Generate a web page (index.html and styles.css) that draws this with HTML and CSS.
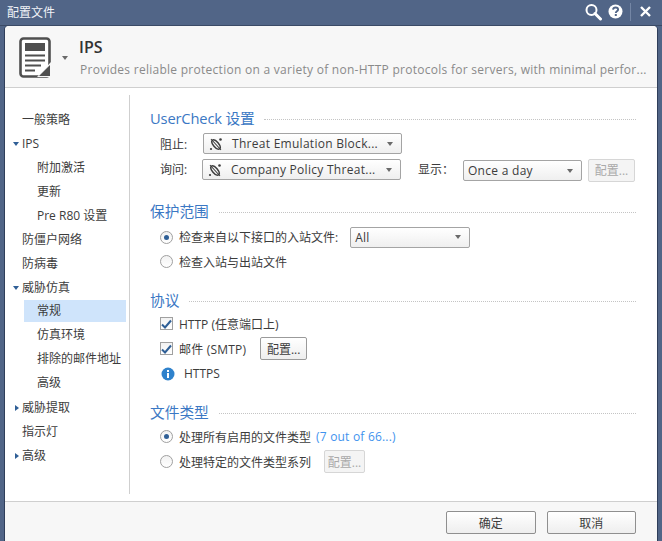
FILE: index.html
```html
<!DOCTYPE html>
<html lang="zh-CN">
<head>
<meta charset="utf-8">
<title>配置文件</title>
<link rel="stylesheet" href="styles.css">
</head>
<body>
<div class="window">
  <div class="titlebar">
    <span class="title">配置文件</span>
    <div class="title-tools">
      <svg class="tool" width="20" height="18" viewBox="0 0 20 18"><circle cx="7.5" cy="7" r="5" fill="none" stroke="#fff" stroke-width="2"/><path d="M11 10.5l5.5 5.5" stroke="#fff" stroke-width="3" stroke-linecap="round"/></svg>
      <svg class="tool help" width="15" height="15" viewBox="0 0 15 15"><circle cx="7.5" cy="7.5" r="7" fill="#fff"/><path d="M5 5.6c.2-1.5 1.3-2.1 2.6-2.1 1.5 0 2.5.8 2.5 2 0 1.900-2.300 1.800-2.300 3.500" fill="none" stroke="#516587" stroke-width="1.900"/><rect x="6.800" y="10" width="2" height="2" fill="#516587"/></svg>
      <span class="tool-sep"></span>
      <svg class="tool" width="11" height="11" viewBox="0 0 11 11"><path d="M1 1l9 9M10 1l-9 9" stroke="#fff" stroke-width="2.400"/></svg>
    </div>
  </div>
  <div class="dialog">
    <header class="head">
      <svg class="doc-icon" width="33" height="41" viewBox="0 0 33 41">
        <rect x="1.500" y="1.500" width="29" height="38" rx="3" fill="#fff" stroke="#4f4f4f" stroke-width="2.600"/>
        <rect x="6" y="6" width="20" height="8" fill="#4f4f4f"/>
        <path d="M6 18.500h20M6 23.500h20M6 28.500h16M6 33.500h10" stroke="#4f4f4f" stroke-width="2.200"/>
        <path d="M32 25v15H18z" fill="#f7f7f7"/>
        <path d="M31 28v11H20z" fill="#4f4f4f"/>
      </svg>
      <span class="arrow-down head-arrow"></span>
      <div class="head-text">
        <h1>IPS</h1>
        <p>Provides reliable protection on a variety of non-HTTP protocols for servers, with minimal perfor...</p>
      </div>
    </header>
    <div class="body">
      <nav class="tree">
        <div class="node">一般策略</div>
        <div class="node"><span class="arrow-open"></span>IPS</div>
        <div class="node sub">附加激活</div>
        <div class="node sub">更新</div>
        <div class="node sub">Pre R80 设置</div>
        <div class="node">防僵户网络</div>
        <div class="node">防病毒</div>
        <div class="node"><span class="arrow-open"></span>威胁仿真</div>
        <div class="node sub selected">常规</div>
        <div class="node sub">仿真环境</div>
        <div class="node sub">排除的邮件地址</div>
        <div class="node sub">高级</div>
        <div class="node"><span class="arrow-closed"></span>威胁提取</div>
        <div class="node">指示灯</div>
        <div class="node"><span class="arrow-closed"></span>高级</div>
      </nav>
      <main class="content">
        <section class="group group-usercheck">
          <h2 class="heading heading-latin"><span>UserCheck 设置</span></h2>
          <div class="row row-block">
            <span class="label">阻止:</span>
            <div class="select select-action"><svg class="te-icon" width="14" height="14" viewBox="0 0 14 14"><use href="#te"/></svg><span class="select-text">Threat Emulation Block...</span><span class="arrow-down"></span></div>
          </div>
          <div class="row row-ask">
            <span class="label label-ask">询问:</span>
            <div class="select select-action"><svg class="te-icon" width="14" height="14" viewBox="0 0 14 14"><use href="#te"/></svg><span class="select-text">Company Policy Threat...</span><span class="arrow-down"></span></div>
            <span class="show-label">显示：</span>
            <div class="select select-freq"><span class="select-text">Once a day</span><span class="arrow-down"></span></div>
            <button class="btn btn-small" disabled>配置...</button>
          </div>
        </section>
        <section class="group group-scope">
          <h2 class="heading"><span>保护范围</span></h2>
          <div class="opt">
            <span class="radio on"></span><span>检查来自以下接口的入站文件:</span>
            <div class="select select-all"><span class="select-text">All</span><span class="arrow-down"></span></div>
          </div>
          <div class="opt"><span class="radio"></span><span>检查入站与出站文件</span></div>
        </section>
        <section class="group group-proto">
          <h2 class="heading"><span>协议</span></h2>
          <div class="opt"><span class="check"><svg width="11" height="10" viewBox="0 0 11 10"><path d="M1 5.500l3 3 6-7" fill="none" stroke="#2f5f96" stroke-width="2"/></svg></span><span>HTTP (任意端口上)</span></div>
          <div class="opt"><span class="check"><svg width="11" height="10" viewBox="0 0 11 10"><path d="M1 5.500l3 3 6-7" fill="none" stroke="#2f5f96" stroke-width="2"/></svg></span><span class="mail-label">邮件 (SMTP)</span><button class="btn btn-mail">配置...</button></div>
          <div class="opt"><svg class="info" width="14" height="14" viewBox="0 0 14 14"><circle cx="7" cy="7" r="6.500" fill="#2f82cc"/><rect x="6" y="3" width="2" height="2" fill="#fff"/><rect x="6" y="6" width="2" height="5" fill="#fff"/></svg><span>HTTPS</span></div>
        </section>
        <section class="group group-types">
          <h2 class="heading"><span>文件类型</span></h2>
          <div class="opt"><span class="radio on"></span><span>处理所有启用的文件类型</span><a class="link">(7 out of 66...)</a></div>
          <div class="opt"><span class="radio"></span><span>处理特定的文件类型系列</span><button class="btn btn-types" disabled>配置...</button></div>
        </section>
      </main>
    </div>
    <footer class="foot">
      <button class="btn btn-foot">确定</button>
      <button class="btn btn-foot">取消</button>
    </footer>
  </div>
</div>
<svg class="defs" width="0" height="0"><defs><g id="te"><ellipse cx="7" cy="7.500" rx="2.600" ry="5.600" transform="rotate(-40 7 7.500)" fill="none" stroke="#3d3d3d" stroke-width="1.500"/><path d="M2 2l10 11" stroke="#3d3d3d" stroke-width="1.100"/><circle cx="11.500" cy="2.500" r="1.300" fill="#3d3d3d"/><circle cx="2" cy="12" r="1.100" fill="#3d3d3d"/></g></defs></svg>
</body>
</html>
```
FILE: styles.css
```css
* { box-sizing: border-box; }
html, body { margin: 0; height: 100%; }
body {
  font-family: "Open Sans", "Noto Sans CJK SC", sans-serif;
  font-size: 12px;
  color: #3c3c3c;
  background: #516587;
  overflow: hidden;
}
.window {
  width: 662px;
  height: 541px;
  display: flex;
  flex-direction: column;
  background: #516587;
}
.titlebar {
  height: 26px;
  flex: none;
  display: flex;
  align-items: center;
  justify-content: space-between;
  padding: 0 11px 2px 7px;
  color: #f0f3f7;
  border-bottom: 1px solid #3a4a66;
}
.title { font-size: 12px; }
.title-tools { display: flex; align-items: center; }
.tool-sep { width: 1px; height: 18px; background: #7486a5; margin: 0 9px 0 7px; }
.help { margin-left: 4px; }
.dialog {
  flex: 1;
  min-height: 0;
  margin: 0 5px 0 5px;
  background: #fff;
  border-radius: 4px 4px 0 0;
  display: flex;
  flex-direction: column;
  box-shadow: -1px 0 0 #2f3e5a, 1px 0 0 #2f3e5a;
}
.head {
  height: 62px;
  flex: none;
  display: flex;
  align-items: flex-start;
  background: #f7f7f7;
  border-bottom: 1px solid #cfcfcf;
  border-radius: 4px 4px 0 0;
  padding: 10px 0 0 14px;
}
.doc-icon { flex: none; margin-top: 1px; }
.head-arrow { margin: 20px 0 0 10px; }
.head-text { margin-left: 11px; }
.head h1 { margin: 0; font-size: 16px; line-height: 22px; font-weight: 600; color: #333; }
.head p { margin: 4px 0 0 1px; font-size: 12px; line-height: 16px; letter-spacing: .27px; color: #8a8a8a; white-space: nowrap; }
.arrow-down {
  display: inline-block;
  flex: none;
  width: 0;
  height: 0;
  border-left: 3.500px solid transparent;
  border-right: 3.500px solid transparent;
  border-top: 4px solid #6a6a6a;
}
.body { flex: 1; min-height: 0; display: flex; padding-top: 7px; padding-bottom: 7px; }
.tree {
  flex: none;
  border-right: 1px solid #cfcfcf;
  padding-top: 12.500px;
  box-sizing: content-box;
  width: 124px;
}
.node {
  height: 24.100px;
  line-height: 24px;
  padding-left: 17px;
  position: relative;
  white-space: nowrap;
}
.node.sub { padding-left: 32px; }
.node.selected { margin: 0 3px 1px 19px; padding-left: 13px; background: #cfe4fb; height: 22px; line-height: 22px; }
.arrow-open, .arrow-closed { position: absolute; width: 0; height: 0; }
.arrow-open {
  left: 8px; top: 10px;
  border-left: 3px solid transparent;
  border-right: 3px solid transparent;
  border-top: 4px solid #2f5f96;
}
.arrow-closed {
  left: 10px; top: 9px;
  border-top: 3px solid transparent;
  border-bottom: 3px solid transparent;
  border-left: 4px solid #2f5f96;
}
.content { flex: 1; min-width: 0; padding: 12px 21px 0 20px; }
.group { margin: 0; }
.heading {
  display: flex;
  align-items: center;
  gap: 10px;
  margin: 0;
  height: 24px;
  font-size: 14.700px;
  font-weight: 400;
  color: #3b78c4;
  white-space: nowrap;
}
.heading-latin { letter-spacing: -.15px; gap: 9px; }
.heading span { margin-bottom: 3px; }
.heading::after { content: ""; flex: 1; border-top: 1px dotted #c4c4c4; }
.row { display: flex; }
.row-block { margin-top: 2px; padding-left: 10px; height: 21px; align-items: center; }
.row-ask { margin-top: 5px; padding-left: 10px; height: 22px; align-items: flex-start; line-height: 21px; }
.label { width: 43px; flex: none; }
.label-ask { width: 42px; }
.show-label { width: 45px; margin-left: 17px; flex: none; }
.select {
  height: 21px;
  display: flex;
  align-items: center;
  border: 1px solid #a4a4a4;
  border-radius: 2px;
  background: linear-gradient(#fff, #efefef);
  padding: 0 8px 0 5px;
}
.select-text { flex: 1; white-space: nowrap; letter-spacing: .28px; }
.select-action { width: 199px; }
.te-icon { flex: none; margin-right: 9px; }
.select-freq { width: 119px; margin: 1px 6px 0 0; padding-left: 4px; }
.select-all { width: 120px; margin-left: 12px; padding-left: 4px; }
.btn {
  font: inherit;
  color: #3c3c3c;
  border: 1px solid #9a9a9a;
  border-radius: 2px;
  background: linear-gradient(#fff, #eee);
  padding: 0;
  height: 23px;
}
.btn:disabled { color: #a9a9a9; border-color: #d6d6d6; background: #f4f4f4; }
.btn-small { width: 47px; }
.group-scope { margin-top: 19px; }
.group-scope .heading { margin-bottom: 1px; }
.group-proto { margin-top: 15px; }
.group-proto .heading { margin-bottom: -2px; }
.group-types { margin-top: 15px; }
.group-types .heading { margin-bottom: -1px; }
.opt {
  display: flex;
  align-items: center;
  height: 24.500px;
  padding-left: 10px;
  white-space: nowrap;
}
.group-proto .opt, .group-types .opt { height: 25px; }
.radio {
  width: 13px;
  height: 13px;
  flex: none;
  border-radius: 50%;
  border: 1px solid #a0a0a0;
  background: linear-gradient(#f2f2f2, #fff);
  margin-right: 6px;
  display: flex;
  align-items: center;
  justify-content: center;
}
.radio.on::after { content: ""; width: 5px; height: 5px; border-radius: 50%; background: #2f5f96; }
.check {
  width: 13px;
  height: 13px;
  flex: none;
  border: 1px solid #a0a0a0;
  background: linear-gradient(#f2f2f2, #fff);
  margin-right: 6px;
  display: flex;
  align-items: center;
  justify-content: center;
}
.info { flex: none; margin: 0 9px 0 1px; }
.mail-label { letter-spacing: .2px; }
.btn-mail { width: 47px; margin-left: 14px; }
.btn-types { width: 41px; margin-left: 13px; }
.link { color: #3f93ee; margin-left: 5px; letter-spacing: .2px; }
.foot {
  height: 40px;
  flex: none;
  background: #f7f7f7;
  border-top: 1px solid #cfcfcf;
  display: flex;
  justify-content: flex-end;
  gap: 11px;
  padding: 9px 21px 0 0;
}
.btn-foot { width: 89.500px; height: 23px; border-color: #8f8f8f; }
.defs { position: absolute; }
```
